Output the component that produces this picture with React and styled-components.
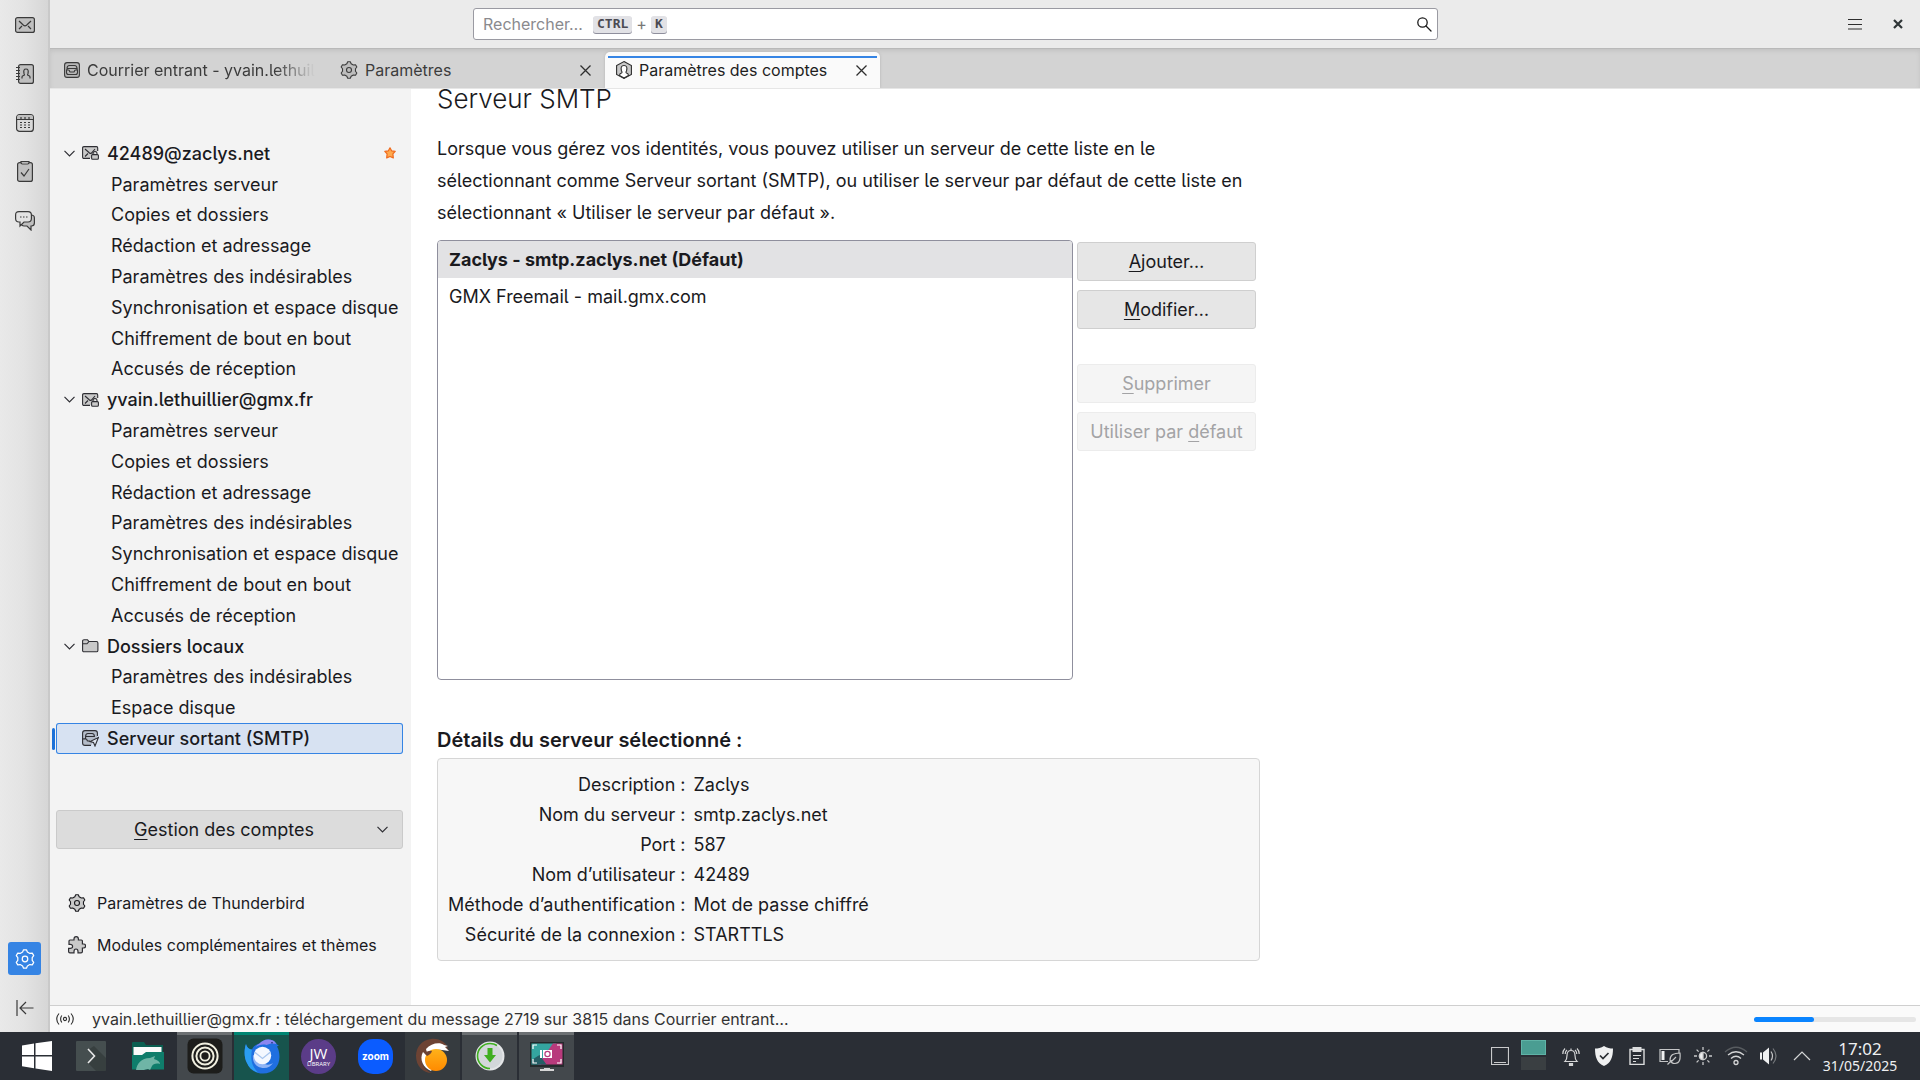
import styled, { createGlobalStyle, css } from "styled-components"

const accountPages = [
  "Paramètres serveur",
  "Copies et dossiers",
  "Rédaction et adressage",
  "Paramètres des indésirables",
  "Synchronisation et espace disque",
  "Chiffrement de bout en bout",
  "Accusés de réception",
]

const accounts = [
  { name: "42489@zaclys.net", icon: MailLockIcon, pages: accountPages, isDefault: true },
  { name: "yvain.lethuillier@gmx.fr", icon: MailLockIcon, pages: accountPages },
  {
    name: "Dossiers locaux",
    icon: FolderIcon,
    pages: ["Paramètres des indésirables", "Espace disque"],
  },
]

const details = [
  ["Description", "Zaclys"],
  ["Nom du serveur", "smtp.zaclys.net"],
  ["Port", "587"],
  ["Nom d’utilisateur", "42489"],
  ["Méthode d’authentification", "Mot de passe chiffré"],
  ["Sécurité de la connexion", "STARTTLS"],
]

// outline of a six-tooth cog, in an 18x18 box
const cogPath =
  [0, 60, 120, 180, 240, 300]
    .flatMap((a) => [
      [8.4, a - 9],
      [8.4, a + 9],
      [6.6, a + 19],
      [6.6, a + 41],
    ])
    .map(([r, a], i) => {
      const rad = ((a - 90) * Math.PI) / 180
      return `${i ? "L" : "M"}${(9 + r * Math.cos(rad)).toFixed(2)} ${(9 + r * Math.sin(rad)).toFixed(2)}`
    })
    .join("") + "z"

function App() {
  return (
    <Desktop>
      <GlobalStyle />
      <Window>
        <Spaces aria-label="Espaces">
          <SpaceButton aria-label="Courrier"><MailIcon /></SpaceButton>
          <SpaceButton aria-label="Carnet d’adresses"><AddressBookIcon /></SpaceButton>
          <SpaceButton aria-label="Agenda"><CalendarIcon /></SpaceButton>
          <SpaceButton aria-label="Tâches"><TasksIcon /></SpaceButton>
          <SpaceButton aria-label="Discussion"><ChatIcon /></SpaceButton>
          <SpacesBottom>
            <SpaceButton $active aria-label="Paramètres"><GearIcon size={20} /></SpaceButton>
            <SpaceButton aria-label="Réduire"><CollapseIcon /></SpaceButton>
          </SpacesBottom>
        </Spaces>
        <Column>
          <Header />
          <Tabs />
          <Workspace>
            <Sidebar />
            <SmtpPanel />
          </Workspace>
          <StatusBar>
            <BroadcastIcon />
            <StatusText>
              yvain.lethuillier@gmx.fr : téléchargement du message 2719 sur 3815 dans Courrier entrant…
            </StatusText>
            <Progress role="progressbar" aria-valuenow={37} aria-label="Progression">
              <ProgressFill style={{ width: "37%" }} />
            </Progress>
          </StatusBar>
        </Column>
      </Window>
      <Taskbar />
    </Desktop>
  )
}

function Header() {
  return (
    <TopBar>
      <Search role="search">
        <SearchInput type="text" placeholder="Rechercher…" aria-label="Rechercher" />
        <Kbd>CTRL</Kbd>
        <Plus>+</Plus>
        <Kbd>K</Kbd>
        <SearchButton type="button" aria-label="Lancer la recherche">
          <svg width="16" height="16" viewBox="0 0 16 16" fill="none" stroke="#1a1a1a" strokeWidth="1.3">
            <circle cx="6.5" cy="6.5" r="4.7" />
            <path d="M10 10l5 5" strokeLinecap="round" />
          </svg>
        </SearchButton>
      </Search>
      <TopActions>
        <IconButton aria-label="Menu">
          <svg width="14" height="14" viewBox="0 0 14 14" stroke="#2e2e2e" strokeWidth="1.2">
            <path d="M0 2.5h14M0 7.5h14M0 12h14" />
          </svg>
        </IconButton>
        <IconButton aria-label="Fermer la fenêtre">
          <svg width="10" height="10" viewBox="0 0 10 10" stroke="#2e3436" strokeWidth="2.2">
            <path d="M1 1l8 8M9 1l-8 8" />
          </svg>
        </IconButton>
      </TopActions>
    </TopBar>
  )
}

function Tabs() {
  return (
    <TabBar role="tablist">
      <Tab role="tab">
        <InboxIcon />
        <TabTitle $fade>Courrier entrant - yvain.lethuil</TabTitle>
      </Tab>
      <Tab role="tab">
        <GearIcon size={18} fill="#bdbdbd" />
        <TabTitle>Paramètres</TabTitle>
        <TabClose aria-label="Fermer l’onglet"><CrossIcon /></TabClose>
      </Tab>
      <Tab role="tab" aria-selected="true" $active>
        <AccountIcon />
        <TabTitle>Paramètres des comptes</TabTitle>
        <TabClose aria-label="Fermer l’onglet"><CrossIcon /></TabClose>
      </Tab>
    </TabBar>
  )
}

function Sidebar() {
  return (
    <Side>
      <Tree>
        {accounts.map(({ name, icon: Icon, pages, isDefault }) => (
          <Account key={name}>
            <AccountRow>
              <ChevronIcon />
              <Icon />
              <span>{name}</span>
              {isDefault && <StarIcon />}
            </AccountRow>
            {pages.map((page) => (
              <PageRow key={page}>{page}</PageRow>
            ))}
          </Account>
        ))}
        <AccountRow $selected>
          <OutgoingIcon />
          <span>Serveur sortant (SMTP)</span>
        </AccountRow>
      </Tree>
      <ManageButton>
        <span><u>G</u>estion des comptes</span>
        <ChevronIcon />
      </ManageButton>
      <SideLinks>
        <SideLink href="#parametres"><GearIcon size={18} fill="#c9c9c9" />Paramètres de Thunderbird</SideLink>
        <SideLink href="#modules"><PuzzleIcon />Modules complémentaires et thèmes</SideLink>
      </SideLinks>
    </Side>
  )
}

function SmtpPanel() {
  return (
    <Main>
      <Content>
        <Title>Serveur SMTP</Title>
        <Intro>
          Lorsque vous gérez vos identités, vous pouvez utiliser un serveur de cette liste en le
          sélectionnant comme Serveur sortant (SMTP), ou utiliser le serveur par défaut de cette liste en
          sélectionnant « Utiliser le serveur par défaut ».
        </Intro>
        <ServerArea>
          <ServerList role="listbox" aria-label="Serveurs SMTP">
            <Server role="option" aria-selected="true" $selected>Zaclys - smtp.zaclys.net (Défaut)</Server>
            <Server role="option" aria-selected="false">GMX Freemail - mail.gmx.com</Server>
          </ServerList>
          <Actions>
            <Action><u>A</u>jouter…</Action>
            <Action><u>M</u>odifier…</Action>
            <ActionGap />
            <Action disabled><u>S</u>upprimer</Action>
            <Action disabled>Utiliser par <u>d</u>éfaut</Action>
          </Actions>
        </ServerArea>
        <Subtitle>Détails du serveur sélectionné :</Subtitle>
        <DetailsBox>
          <DetailsTable>
            <tbody>
              {details.map(([label, value]) => (
                <tr key={label}>
                  <th scope="row">{label}&nbsp;:</th>
                  <td>{value}</td>
                </tr>
              ))}
            </tbody>
          </DetailsTable>
        </DetailsBox>
      </Content>
    </Main>
  )
}

function Taskbar() {
  return (
    <Panel>
      <Launchers>
        <StartButton aria-label="Menu des applications">
          <svg width="32" height="30" viewBox="0 0 32 30" fill="#fff">
            <path d="M1 4.5L13 2.4V14H1zM14.500 2.200L31 0v14H14.500zM1 15.500h12v11.800L1 25.200zM14.500 15.500H31V30l-16.500-2.600z" />
          </svg>
        </StartButton>
        <Task aria-label="Terminal">
          <svg width="30" height="30" viewBox="0 0 30 30">
            <rect width="30" height="30" rx="1" fill="#454e4f" />
            <path d="M12 9l6 6-6 7 8 8h10V17L18 5z" fill="#2f3536" opacity=".6" />
            <path d="M12 8l6.500 7-6.500 7" fill="none" stroke="#e8e8e8" strokeWidth="1.600" />
          </svg>
        </Task>
        <Task aria-label="Fichiers">
          <svg width="34" height="30" viewBox="0 0 34 30">
            <path d="M1 2q0-1 1-1h11l2 3h17v10H1z" fill="#0b5e50" />
            <path d="M2.500 6h28v8h-28z" fill="#fafafa" />
            <path d="M1 14h10l4-3h18v17.500H1z" fill="#0f7d6b" />
            <path d="M5 29c1-6 5-12 14-12l5-2-1 3c4 1 6 3 6 5-4-1-7 0-8 2l-2 4c-2-2-5 0-6 0z" fill="#6fb5a6" />
          </svg>
        </Task>
        <Task $running aria-label="Cercles">
          <svg width="36" height="36" viewBox="0 0 36 36" fill="none" stroke="#f1f0e0">
            <rect x=".5" y=".5" width="35" height="35" rx="6" fill="#1d1d1b" stroke="none" />
            <circle cx="18" cy="18" r="12.600" strokeWidth="2" />
            <circle cx="18" cy="18" r="8.600" strokeWidth="2" />
            <circle cx="18" cy="18" r="4.600" strokeWidth="1.800" />
          </svg>
        </Task>
        <Task $running $focused aria-label="Thunderbird">
          <svg width="36" height="36" viewBox="0 0 36 36">
            <path d="M2 6C0 12 0 20 3 25c3 7 9 10.500 16 10.500 10 0 16.500-7.500 16.500-16.500 0-4.500-1-8-2.500-10.500l2-1C32.500 7 32 4 29 2.500 24 0 18 2 15.500 5.500 12 6.500 9.500 8 8 11.500 5.500 11.500 3 10 2 6z" fill="#1f6fe0" />
            <path d="M15.500 5.500C18 2 24 0 29 2.500c2 1 2.500 2.500 3.500 3.500-4-1-7-.5-10 1-4-1-8 0-11 2 1-1.500 2.500-2.800 4-3.500z" fill="#8a86f0" />
            <path d="M2 6C0 12 0 20 3 25c2 5 6 8 11 9.500-4-4-6-8-6.500-12.500-.5-4 0-7 .5-10.500C5.500 11.500 3 10 2 6z" fill="#2b9df2" />
            <path d="M9 17c-1 8 4 13 11 13 4 0 7-2 9-5-3 2-6 2-8 1z" fill="#8fb4f5" />
            <circle cx="18.500" cy="17.500" r="8.700" fill="#f4f8ff" />
            <path d="M10.500 14l8 6.500 8-6.500" fill="none" stroke="#a9c6ee" strokeWidth="1.300" />
            <circle cx="28" cy="4.800" r=".8" fill="#17256b" />
          </svg>
        </Task>
        <Task aria-label="JW Library">
          <JwBadge><b>JW</b><small>LIBRARY</small></JwBadge>
        </Task>
        <Task aria-label="Zoom">
          <ZoomBadge>zoom</ZoomBadge>
        </Task>
        <Task $open aria-label="Lutris">
          <svg width="36" height="36" viewBox="0 0 36 36">
            <defs>
              <linearGradient id="orange" x1="0" y1="0" x2="0" y2="1">
                <stop offset="0" stopColor="#ffb21a" />
                <stop offset="1" stopColor="#ff8a00" />
              </linearGradient>
            </defs>
            <path d="M33 12C32 4 24 0 16 1 6 2 1 10 1 18c0 10 7 17 16 17-7-3-11-9-10-15 6-2 12-4 15-9z" fill="#6d4334" />
            <path d="M11 11c5-6 14-7 18-4l4 1-3 1 4 4-7-1c-7-1-11 1-15 3z" fill="#fff" />
            <path d="M8 14c-4 7 0 16 8 19l2-3-7-13z" fill="#fff" />
            <circle cx="21" cy="22" r="11" fill="url(#orange)" />
            <path d="M9 14c2 0 6-2 8-1-1 3-3 4-5 5z" fill="#6d4334" />
          </svg>
        </Task>
        <Task $running aria-label="Téléchargements">
          <svg width="30" height="30" viewBox="0 0 30 30">
            <circle cx="15" cy="15" r="14.500" fill="#e4e6e8" />
            <circle cx="15" cy="15" r="12.500" fill="#d3d7da" />
            <path d="M15 27.500a12.500 12.500 0 010-25q4 0 7 2" fill="none" stroke="#3fae20" strokeWidth="1.600" />
            <path d="M12.500 7h5v7h3.500l-6 7.500L9 14h3.500z" fill="#3fae20" />
          </svg>
        </Task>
        <Task $running aria-label="Spectacle">
          <svg width="36" height="30" viewBox="0 0 36 30">
            <rect x="1" y="1" width="34" height="25" fill="#242a2c" />
            <path d="M2.500 2.500h25L12 23.500H2.500z" fill="#34a5a0" />
            <path d="M24 2.500h9.500v21H9z" fill="#b83a7c" />
            <path d="M2.500 23.500V19l8-5 7 9.500z" fill="#255f66" />
            <path d="M4 8V4h4M28 4h4v4M32 18v4h-4M8 22H4v-4" fill="none" stroke="#fff" strokeWidth="1.200" />
            <path d="M11 9h2v8h-2zM14 9h9v8h-9z" fill="#fff" />
            <circle cx="18.500" cy="13" r="2.600" fill="#fff" stroke="#b83a7c" strokeWidth="1.200" />
            <path d="M15 27h6v1h4v2H11v-2h4z" fill="#d6d6d6" />
          </svg>
        </Task>
      </Launchers>
      <Tray>
        <TrayItem>
          <svg width="18" height="18" viewBox="0 0 18 18" fill="none" stroke="#c9cacb">
            <path d="M.5.5h17v17H.5zM3 15.500h12" strokeWidth="1.200" />
          </svg>
        </TrayItem>
        <Pager><i /><i /></Pager>
        <TrayItem>
          <svg width="18" height="19" viewBox="0 0 18 19" fill="none" stroke="#d4d5d6" strokeWidth="1.200">
            <path d="M3 14.500c2-2 2-3 2-6C5 5 6.500 3.500 9 3.500S13 5 13 8.500c0 3 0 4 2 6zM9 1.500v2" />
            <path d="M7.500 16.500h3v2h-3z" fill="#d4d5d6" />
            <path d="M3 1.500Q.8 3.500.8 7M5 3Q3.200 4.500 3.200 7M15 1.500q2.200 2 2.200 5.500M13 3q1.800 1.500 1.800 4" />
          </svg>
        </TrayItem>
        <TrayItem>
          <svg width="20" height="22" viewBox="0 0 20 22">
            <path d="M10 1c3 2 6 2.500 9 2.500C19 12 17 18 10 21 3 18 1 12 1 3.500 4 3.500 7 3 10 1z" fill="#eff0f1" />
            <path d="M6 10.500l3 3 5.500-5.500" fill="none" stroke="#2a2e33" strokeWidth="1.700" />
          </svg>
        </TrayItem>
        <TrayItem>
          <svg width="16" height="18" viewBox="0 0 16 18" fill="none" stroke="#dcddde">
            <path d="M1 2.500h14v15H1z" strokeWidth="1.400" />
            <path d="M3.500 0h9v5h-9z" fill="#dcddde" stroke="none" />
            <path d="M4 8.500h8M4 11.500h6M4 14.500h3" strokeWidth="1.200" />
          </svg>
        </TrayItem>
        <TrayItem>
          <svg width="22" height="18" viewBox="0 0 22 18" fill="none" stroke="#c4c5c6" strokeWidth="1.200">
            <path d="M9 14.500H1v-12h19V6" />
            <path d="M2.500 4h3v9h-3z" fill="#eff0f1" stroke="none" />
            <path d="M8.500 17.500l4-4M21 6c-6 0-10 2-10 7 1 3 3 3.500 5 3.500 5 0 5.500-5 5-10.500zM12.500 14.500L17 10" />
          </svg>
        </TrayItem>
        <TrayItem>
          <svg width="18" height="18" viewBox="0 0 18 18" fill="none" stroke="#c9cacb" strokeWidth="1.300">
            <circle cx="9" cy="9" r="3.600" />
            <path d="M9 5.400a3.600 3.600 0 000 7.200z" fill="#eff0f1" />
            <path d="M9 0v3M9 15v3M0 9h3M15 9h3M2.600 2.600l2 2M13.400 13.400l2 2M2.600 15.400l2-2M13.400 4.600l2-2" />
          </svg>
        </TrayItem>
        <TrayItem>
          <svg width="24" height="20" viewBox="0 0 24 20" fill="none" strokeWidth="1.300">
            <path d="M1 6Q12-3.500 23 6" stroke="#585c60" />
            <path d="M4 9q8-6.500 16 0M7 12.500q5-4.500 10 0" stroke="#d4d5d6" />
            <circle cx="12" cy="16.500" r="2" stroke="#d4d5d6" />
          </svg>
        </TrayItem>
        <TrayItem>
          <svg width="20" height="20" viewBox="0 0 20 20" fill="none" strokeWidth="1.200">
            <path d="M1 6.500h2v7H1zM4 6.500l6-5v17l-6-5z" fill="#eff0f1" />
            <path d="M12 5.500q3 4.500 0 9" stroke="#c4c5c6" />
            <path d="M14 2.500q6 7.500 0 15" stroke="#75797c" />
          </svg>
        </TrayItem>
        <TrayItem>
          <svg width="18" height="10" viewBox="0 0 18 10" fill="none" stroke="#d4d5d6" strokeWidth="1.200">
            <path d="M1 9l8-8 8 8" />
          </svg>
        </TrayItem>
        <Clock>
          <Time>17:02</Time>
          <DateText>31/05/2025</DateText>
        </Clock>
      </Tray>
    </Panel>
  )
}

/* icons */

function MailIcon() {
  return (
    <svg width="20" height="16" viewBox="0 0 20 16" fill="none" stroke="#3a3a3a" strokeWidth="1.2">
      <rect x=".6" y=".6" width="18.800" height="14.800" rx="2" fill="#bfbfbf" />
      <path d="M4 4l4.500 4.300q1.500 1.200 3 0L16 4M4 12l3-3M16 12l-3-3" />
    </svg>
  )
}

function AddressBookIcon() {
  return (
    <svg width="18" height="20" viewBox="0 0 18 20" fill="none" stroke="#3a3a3a" strokeWidth="1.2">
      <rect x="2.600" y=".6" width="14.800" height="18.800" rx="2" fill="#bfbfbf" />
      <path d="M0 3.500h4M0 6.500h4M0 9.500h4M0 12.500h4M0 15.500h4" />
      <path d="M6 14.500V13q0-1 1.500-1.500Q9 11 8 9.500q-1-4.500 2-4.500t2 4.500q-1 1.500.5 2t1.500 1.500v1.500" />
    </svg>
  )
}

function CalendarIcon() {
  return (
    <svg width="18" height="18" viewBox="0 0 18 18" fill="none" stroke="#3a3a3a" strokeWidth="1.200">
      <rect x=".6" y=".6" width="16.800" height="16.800" rx="3" fill="#d9d9d9" />
      <path d="M1 5V3q0-2 2-2h12q2 0 2 2v2z" fill="#bfbfbf" stroke="none" />
      <path d="M.6 5.500h16.800M5 3v3M9 3v3M13 3v3" />
      <path d="M4 8.500h2M8 8.500h2M12 8.500h2M4 11h2M8 11h2M12 11h2M4 13.500h2M8 13.500h2M12 13.500h2" />
    </svg>
  )
}

function TasksIcon() {
  return (
    <svg width="16" height="21" viewBox="0 0 16 21" fill="none" stroke="#3a3a3a" strokeWidth="1.200">
      <rect x=".6" y="1.600" width="14.800" height="18.800" rx="2" fill="#bfbfbf" />
      <path d="M4 .6h8v1q0 1.400-1.400 1.400H5.400Q4 3 4 1.600z" fill="#e5e5e5" />
      <path d="M4 11.500l3 3.500 5-7" />
    </svg>
  )
}

function ChatIcon() {
  return (
    <svg width="20" height="20" viewBox="0 0 20 20" fill="none" stroke="#3a3a3a" strokeWidth="1.200">
      <path d="M16 4q3.400 0 3.400 3v5q0 3-3 3H16v4l-4-4H9q-2 0-3-2z" fill="#bfbfbf" />
      <path d="M4 .6h9q3.400 0 3.400 3.400v3.500q0 3.500-3.400 3.500H9l-4 4v-4H4Q.6 11 .6 7.500V4Q.6.600 4 .6z" fill="#e2e2e2" />
      <path d="M5 6h1.500M8 6h1.500M11 6h1.500" />
    </svg>
  )
}

function GearIcon({ size, fill = "none" }) {
  return (
    <svg width={size} height={size} viewBox="0 0 18 18" fill={fill} stroke="currentColor" strokeWidth="1.100">
      <path d={cogPath} strokeLinejoin="round" />
      <circle cx="9" cy="9" r="2.500" fill="none" />
    </svg>
  )
}

function CollapseIcon() {
  return (
    <svg width="18" height="16" viewBox="0 0 18 16" fill="none" stroke="#3a3a3a" strokeWidth="1.200">
      <path d="M1 0v16M17.500 8H4.500M10 2L4 8l6 6" />
    </svg>
  )
}

function CrossIcon() {
  return (
    <svg width="11" height="11" viewBox="0 0 11 11" stroke="#2e2e2e" strokeWidth="1.300">
      <path d="M.5.5l10 10M10.500.5l-10 10" />
    </svg>
  )
}

function InboxIcon() {
  return (
    <svg width="16" height="16" viewBox="0 0 16 16" fill="none" stroke="#3a3a3a" strokeWidth="1.100">
      <rect x=".6" y=".6" width="14.800" height="14.800" rx="2.500" fill="#b8b8b8" />
      <path d="M3 6.500q0-3 2.500-3h5q2.500 0 2.500 3" />
      <path d="M3 6.500h10v1.500M3 6.500V8M2.500 8h2q1 0 1 1t1 1h3q1 0 1-1t1-1h2v2.500q0 2-2 2h-7q-2 0-2-2z" />
    </svg>
  )
}

function AccountIcon() {
  return (
    <svg width="16" height="18" viewBox="0 0 16 18" fill="none" stroke="#2e2e2e" strokeWidth="1.100">
      <path d="M8 .6L15.400 4.500v9L8 17.400.6 13.500v-9z" fill="#c9c9c9" />
      <path d="M3.500 14.500q0-2 2-2.500 1-.5 0-2-1.500-5.500 2.500-5.500t2.500 5.500q-1 1.500 0 2 2 .5 2 2.500L8 17z" fill="#fff" />
    </svg>
  )
}

function ChevronIcon() {
  return (
    <svg width="11" height="7" viewBox="0 0 11 7" fill="none" stroke="#2e2e33" strokeWidth="1.200">
      <path d="M.5.8l5 5 5-5" />
    </svg>
  )
}

function MailLockIcon() {
  return (
    <svg width="17" height="14" viewBox="0 0 17 14" fill="none" stroke="#2e2e33" strokeWidth="1.100">
      <path d="M8 12.400H2q-1.400 0-1.400-1.400V2Q.6.600 2 .6h12.500q1.200 0 1.200 1.400v3" fill="#c9c9c9" />
      <path d="M3 3l4.500 4q1 .8 2 0L13 3M3 10.500l3-3" />
      <rect x="9.600" y="8.600" width="6.800" height="4.600" rx="1" fill="#c9c9c9" />
      <path d="M11 8.500v-1q0-2 2-2t2 2v1" />
    </svg>
  )
}

function FolderIcon() {
  return (
    <svg width="17" height="14" viewBox="0 0 17 14" fill="none" stroke="#2e2e33" strokeWidth="1.100">
      <path d="M.6 3V2Q.6.800 2 .8h3.500l1.500 1.700h7.500q1.400 0 1.400 1.400v7.500q0 1.400-1.400 1.400H2Q.6 12.800.6 11.400z" fill="#c9c9c9" />
      <path d="M.6 4.800h4.400l2-2.300" />
    </svg>
  )
}

function OutgoingIcon() {
  return (
    <svg width="17" height="17" viewBox="0 0 17 17" fill="none" stroke="#2e2e33" strokeWidth="1.100">
      <path d="M9 15.400H3q-2.400 0-2.400-2.400V3Q.6.600 3 .6h10q2.400 0 2.400 2.400v3" fill="#b4bcc9" />
      <path d="M.6 9l3-.500q0-.5 0-2 0-3 2.400-3h4q2.400 0 2.400 3H3.600M.6 9h3.400q1 0 1 1t1 1h2" />
      <path d="M16.400 7.500L8 11.500l3.500 1 1.500 3.500z" fill="#dfe6f1" />
    </svg>
  )
}

function StarIcon() {
  return (
    <svg className="star" width="12" height="12" viewBox="0 0 12 12">
      <path d="M6 .8l1.600 3 3.600.6-2.300 2.500.4 4L6 9.500l-3.300 1.400.4-4L.8 4.400l3.600-.6z" fill="#ffa94d" stroke="#f06a1d" strokeWidth="1.200" strokeLinejoin="round" />
    </svg>
  )
}

function PuzzleIcon() {
  return (
    <svg width="18" height="18" viewBox="0 0 18 18" fill="#c9c9c9" stroke="#2e2e33" strokeWidth="1.200">
      <path d="M1 6.500V5q0-1 1-1h4V3Q6 .6 8.200.6T10.400 3v1h3q1 0 1 1v3h1q2.200 0 2.200 2t-2.200 2h-1v3.400q0 1.400-1.400 1.400h-3v-1.400Q10 13 8 13t-2 2.400v1.400H2q-1.400 0-1.400-1.400v-3h1.600q2.400 0 2.400-2t-2.400-2H1z" />
    </svg>
  )
}

function BroadcastIcon() {
  return (
    <svg width="18" height="12" viewBox="0 0 18 12" fill="none" stroke="#2e2e2e" strokeWidth="1.100">
      <circle cx="9" cy="6" r="1.600" />
      <path d="M5.800 2.500q-2.400 3.500 0 7M12.200 2.500q2.400 3.500 0 7M3 .5q-4.500 5.500 0 11M15 .5q4.500 5.500 0 11" />
    </svg>
  )
}

export default App

/* styles */

const GlobalStyle = createGlobalStyle`
  * { box-sizing: border-box; }
  body {
    margin: 0;
    font-family: Inter, "Noto Sans", sans-serif;
    font-feature-settings: "cv05";
    font-size: 18px;
    color: #1a1a1e;
  }
  button, input { font: inherit; font-feature-settings: inherit; color: inherit; }
  button { border: 0; padding: 0; background: none; }
  ul { margin: 0; padding: 0; list-style: none; }
  svg { flex: none; display: block; }
  u { text-underline-offset: 3px; text-decoration-skip-ink: none; }
`

const Desktop = styled.div`
  height: 100vh;
  display: flex;
  flex-direction: column;
  overflow: hidden;
`

const Window = styled.div`
  flex: 1;
  min-height: 0;
  display: flex;
  background: #fff;
`

const Spaces = styled.nav`
  width: 50px;
  padding: 8px 0 8px 1px;
  display: flex;
  flex-direction: column;
  align-items: center;
  gap: 16px;
  background: linear-gradient(to right, #e9e9e9, #e3e3e3 50%, #d6d6d6);
  border-right: 2px solid #c9c9c9;
`

const SpaceButton = styled.button`
  width: 33px;
  height: 33px;
  display: grid;
  place-items: center;
  border-radius: 3px;
  ${(p) => p.$active && css`
    background: #3584e4;
    color: #fff;
  `}
`

const SpacesBottom = styled.div`
  margin-top: auto;
  display: flex;
  flex-direction: column;
  gap: 16px;
`

const Column = styled.div`
  flex: 1;
  min-width: 0;
  display: flex;
  flex-direction: column;
`

const TopBar = styled.header`
  height: 48px;
  display: flex;
  justify-content: center;
  align-items: center;
  padding-left: 66px;
  background: #ebebeb;
`

const Search = styled.form`
  width: 965px;
  height: 32px;
  margin-left: auto;
  display: flex;
  align-items: center;
  padding: 0 3px 0 9px;
  background: #fff;
  border: 1px solid #9a9aa2;
  border-radius: 3px;
`

const SearchInput = styled.input`
  width: 110px;
  padding: 0;
  border: 0;
  outline: 0;
  background: none;
  font-size: 16px;
  &::placeholder { color: #8a8a8e; opacity: 1; }
`

const Kbd = styled.kbd`
  height: 17px;
  padding: 0 4px;
  font: bold 13px/16px "DejaVu Sans Mono", monospace;
  color: #4a4a52;
  background: #e2e2e6;
  border-radius: 3px;
  box-shadow: 0 1px 0 #8f8f9d;
`

const Plus = styled.span`
  padding: 0 4px;
  font-size: 16px;
  color: #777;
`

const SearchButton = styled.button`
  margin-left: auto;
  padding: 0 2px;
`

const TopActions = styled.div`
  flex: 1;
  max-width: 482px;
  display: flex;
  justify-content: flex-end;
  gap: 31px;
  padding-right: 17px;
`

const IconButton = styled.button`
  display: grid;
  place-items: center;
`

const TabBar = styled.div`
  height: 41px;
  display: flex;
  gap: 1px;
  padding: 4px 0 0 3px;
  background: #d3d3d3;
  border-bottom: 1px solid #e6e6e6;
  box-shadow: inset 0 1px 0 #b9b9b9, inset 0 3px 4px #c2c2c2;
`

const Tab = styled.div`
  width: 275px;
  display: flex;
  align-items: center;
  gap: 7px;
  padding: 0 13px 0 11px;
  font-size: 16px;
  color: #3c3c3c;
  border-radius: 5px 5px 0 0;
  ${(p) => p.$active && css`
    color: #1e1e1e;
    background: linear-gradient(#3584e4, #3584e4) 3px 4px / calc(100% - 6px) 2px no-repeat, #fafafa;
    box-shadow: 0 0 3px #b4b4b4;
    clip-path: inset(-3px -3px 0 -3px);
  `}
`

const TabTitle = styled.span`
  flex: 1;
  white-space: nowrap;
  overflow: hidden;
  ${(p) => p.$fade && css`
    mask-image: linear-gradient(to left, transparent, #000 40px);
  `}
`

const TabClose = styled.button`
  display: grid;
  place-items: center;
`

const Workspace = styled.div`
  flex: 1;
  min-height: 0;
  display: flex;
`

const Side = styled.aside`
  width: 361px;
  padding: 49px 8px 0 6px;
  background: #f3f3f3;
`

/* twenty equal rows */
const Tree = styled.div`
  height: 616px;
  display: flex;
  flex-direction: column;
`

const Account = styled.div`
  display: contents;
`

const row = css`
  flex: 1;
  min-height: 0;
  display: flex;
  align-items: center;
  white-space: nowrap;
`

const AccountRow = styled.div`
  ${row}
  padding-left: 8px;
  font-weight: 500;
  border-radius: 3px;
  span { margin-left: 8px; }
  svg + svg { margin-left: 7px; }
  .star { margin: 0 7px 0 auto; }
  ${(p) => p.$selected && css`
    position: relative;
    padding-left: 26px;
    background: #d7e2f2;
    box-shadow: inset 0 0 0 1px #3584e4;
    &::before {
      content: "";
      position: absolute;
      left: -4px;
      top: 5px;
      bottom: 4px;
      width: 3px;
      background: #1c71d8;
      border-radius: 2px;
    }
  `}
`

const PageRow = styled.div`
  ${row}
  padding-left: 55px;
`

const ManageButton = styled.button`
  width: 100%;
  height: 39px;
  margin-top: 56px;
  padding: 0 14px;
  display: flex;
  align-items: center;
  background: #dcdcdc;
  border: 1px solid #cacaca;
  border-radius: 3px;
  span { flex: 1; }
`

const SideLinks = styled.div`
  margin-top: 33px;
  display: flex;
  flex-direction: column;
`

const SideLink = styled.a`
  height: 42px;
  padding-left: 12px;
  display: flex;
  align-items: center;
  gap: 11px;
  font-size: 16px;
  color: inherit;
  text-decoration: none;
  white-space: nowrap;
`

const Main = styled.main`
  flex: 1;
  min-width: 0;
  overflow: hidden;
  padding-left: 26px;
`

/* the page is scrolled a little, so its title is cut by the tab bar */
const Content = styled.div`
  max-width: 823px;
  margin-top: -6px;
`

const Title = styled.h1`
  margin: 0 0 18px;
  font-size: 26px;
  line-height: 32px;
  font-weight: 300;
`

const Intro = styled.p`
  margin: 0 0 11px;
  line-height: 32px;
`

const ServerArea = styled.div`
  height: 440px;
  padding-right: 4px;
  display: flex;
  gap: 4px;
`

const ServerList = styled.ul`
  flex: 1;
  border: 1px solid #8f8f9d;
  border-radius: 4px;
  overflow: hidden;
`

const Server = styled.li`
  height: 37px;
  padding-left: 11px;
  line-height: 37px;
  ${(p) => p.$selected && css`
    font-weight: 700;
    background: #e2e2e4;
  `}
`

const Actions = styled.div`
  width: 179px;
  padding-top: 2px;
  display: flex;
  flex-direction: column;
  gap: 9px;
`

const Action = styled.button`
  height: 39px;
  background: #e6e6e6;
  border: 1px solid #cfcfcf;
  border-radius: 3px;
  white-space: nowrap;
  &:disabled {
    color: #a3a3a5;
    background: #f5f5f5;
    border-color: #ececec;
  }
`

const ActionGap = styled.div`
  height: 17px;
`

const Subtitle = styled.h2`
  margin: 44px 0 2px;
  font-size: 20px;
  line-height: 32px;
  font-weight: 600;
`

const DetailsBox = styled.section`
  padding: 10px;
  background: #f7f7f7;
  border: 1px solid #d6d6d6;
  border-radius: 4px;
`

const DetailsTable = styled.table`
  height: 181px;
  border-spacing: 0;
  th, td { padding: 0; }
  th {
    padding-right: 8px;
    font-weight: 400;
    text-align: right;
  }
`

const StatusBar = styled.footer`
  height: 27px;
  padding: 0 4px 0 6px;
  display: flex;
  align-items: center;
  gap: 18px;
  background: #fafafa;
  border-top: 1px solid #cfcfcf;
  font-size: 16px;
  color: #333;
`

const StatusText = styled.span`
  flex: 1;
`

const Progress = styled.div`
  width: 162px;
  height: 5px;
  background: #e6e6e6;
  border-radius: 3px;
`

const ProgressFill = styled.div`
  height: 100%;
  background: #0a84ff;
  border-radius: 3px;
`

const Panel = styled.footer`
  height: 48px;
  display: flex;
  justify-content: space-between;
  background: #2a2e35;
  color: #eff0f1;
  font-family: "Noto Sans", sans-serif;
`

const Launchers = styled.div`
  display: flex;
  gap: 2px;
`

const StartButton = styled.button`
  width: 61px;
  padding-left: 13px;
  display: grid;
  place-items: center;
`

const Task = styled.button`
  width: 55px;
  display: grid;
  place-items: center;
  ${(p) => p.$open && css`
    background: #363b3f;
  `}
  ${(p) => p.$running && css`
    background: linear-gradient(#6c7073, #6c7073) top / 100% 3px no-repeat, #43484c;
  `}
  ${(p) => p.$focused && css`
    background: linear-gradient(#008573, #008573) top / 100% 3px no-repeat, #17544d;
  `}
`

const Badge = styled.span`
  width: 35px;
  height: 35px;
  border-radius: 50%;
  color: #fff;
`

const JwBadge = styled(Badge)`
  display: flex;
  flex-direction: column;
  align-items: center;
  padding-top: 6px;
  background: #5b3c88;
  b { font: 15px/16px "Open Sans", sans-serif; }
  small { font: 6px/6px "Open Sans", sans-serif; }
`

const ZoomBadge = styled(Badge)`
  border-radius: 15px;
  background: #0b5cff;
  font: bold 10px/34px Inter, sans-serif;
  text-align: center;
`

const Tray = styled.div`
  display: flex;
  padding-right: 18px;
`

const TrayItem = styled.span`
  width: 33px;
  display: grid;
  place-items: center;
`

const Pager = styled.span`
  width: 25px;
  margin: 8px 8px 10px 5px;
  display: grid;
  gap: 2px;
  i { background: #3a3f42; }
  i:first-child {
    background: #4a9d92;
    border: 1px solid #5fb3a6;
  }
`

const Clock = styled.time`
  width: 84px;
  display: flex;
  flex-direction: column;
  align-items: center;
  padding-top: 7px;
`

const Time = styled.span`
  font-size: 17px;
  line-height: 20px;
`

const DateText = styled.span`
  font-size: 14px;
  line-height: 14px;
`
